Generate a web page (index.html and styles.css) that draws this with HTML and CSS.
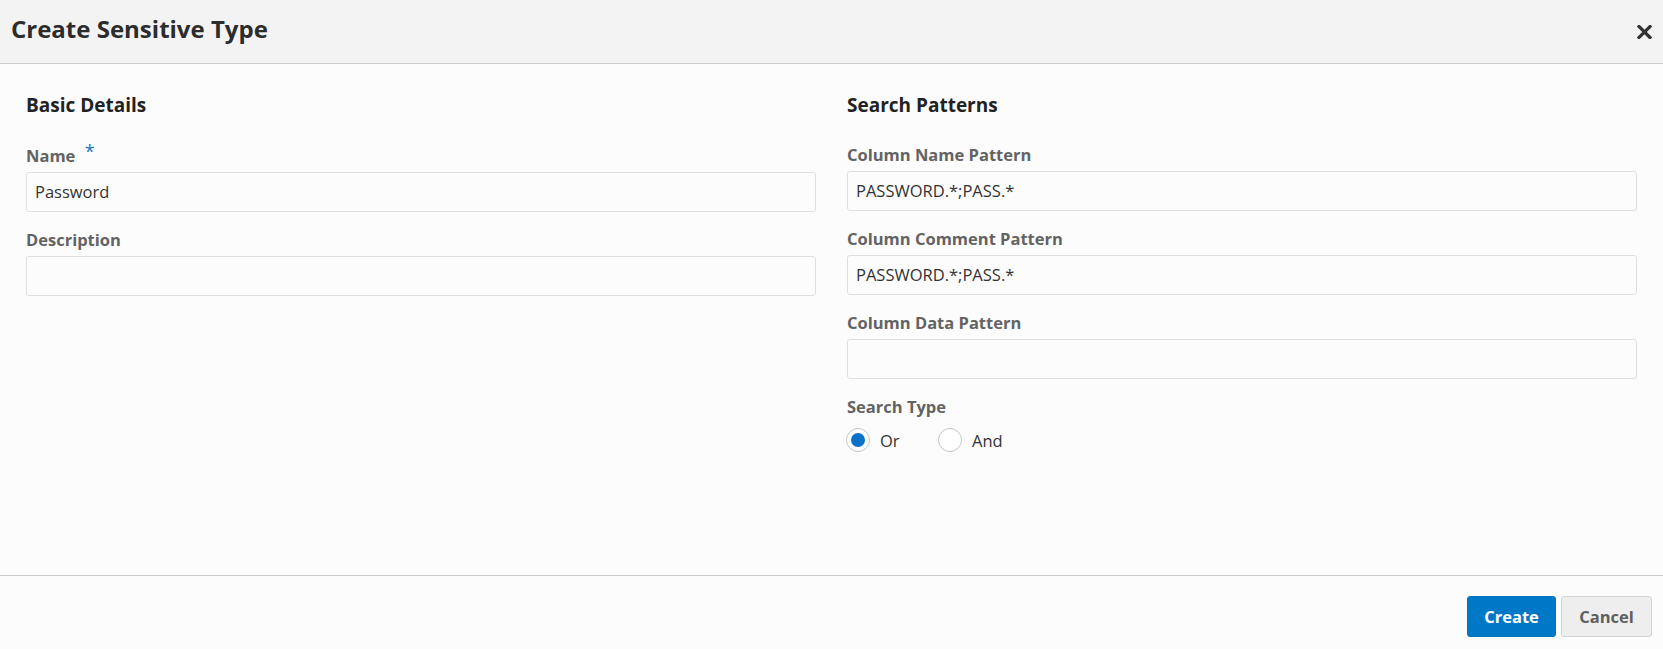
FILE: index.html
```html
<!DOCTYPE html>
<html lang="en">
<head>
<meta charset="utf-8">
<title>Create Sensitive Type</title>
<link rel="stylesheet" href="styles.css">
</head>
<body>
<div class="dialog">
  <header class="dlg-header">
    <h1 class="dlg-title">Create Sensitive Type</h1>
    <button class="close-btn" aria-label="Close">
      <svg width="15" height="14" viewBox="0 0 15 14"><path d="M2 1.5 L13 12.5 M13 1.5 L2 12.5" stroke="#333" stroke-width="3.2" stroke-linecap="square" fill="none"/></svg>
    </button>
  </header>
  <main class="dlg-body">
    <section class="col">
      <h2 class="section-title">Basic Details</h2>
      <div class="field">
        <label class="field-label">Name <span class="req">*</span></label>
        <div class="input">Password</div>
      </div>
      <div class="field">
        <label class="field-label">Description</label>
        <div class="input"></div>
      </div>
    </section>
    <section class="col">
      <h2 class="section-title">Search Patterns</h2>
      <div class="field">
        <label class="field-label">Column Name Pattern</label>
        <div class="input">PASSWORD.*;PASS.*</div>
      </div>
      <div class="field">
        <label class="field-label">Column Comment Pattern</label>
        <div class="input">PASSWORD.*;PASS.*</div>
      </div>
      <div class="field">
        <label class="field-label">Column Data Pattern</label>
        <div class="input"></div>
      </div>
      <div class="field field-radio">
        <label class="field-label">Search Type</label>
        <div class="radios">
          <span class="radio-item"><span class="radio checked"></span><span class="radio-text">Or</span></span>
          <span class="radio-item"><span class="radio"></span><span class="radio-text">And</span></span>
        </div>
      </div>
    </section>
  </main>
  <footer class="dlg-footer">
    <button class="btn btn-primary">Create</button>
    <button class="btn btn-secondary">Cancel</button>
  </footer>
</div>
</body>
</html>
```
FILE: styles.css
```css
* { box-sizing: border-box; }
html, body {
  margin: 0;
  padding: 0;
  background: #fcfcfc;
  font-family: "Open Sans", "Noto Sans", sans-serif;
}
.dialog {
  height: 649px;
  display: flex;
  flex-direction: column;
  background: #fcfcfc;
}
.dlg-header {
  height: 64px;
  flex: none;
  background: #f3f3f3;
  border-bottom: 1px solid #cbcbcb;
  display: flex;
  justify-content: space-between;
  align-items: flex-start;
  padding: 13px 11px 0 11px;
}
.dlg-title {
  margin: 0;
  font-size: 24px;
  line-height: 32px;
  font-weight: 700;
  color: #2c2c2c;
}
.close-btn {
  border: 0;
  background: transparent;
  padding: 0;
  margin-top: 12px;
  width: 15px;
  height: 14px;
  display: block;
}
.close-btn svg { display: block; }
.dlg-body {
  flex: 1;
  display: grid;
  grid-template-columns: 1fr 1fr;
  column-gap: 31px;
  padding: 29px 26px 0 26px;
}
.section-title {
  margin: 0 0 28px 0;
  font-size: 19px;
  line-height: 24px;
  font-weight: 700;
  color: #222;
}
.field { margin-bottom: 18px; }
.field-radio { margin-top: 2px; }
.field-label {
  display: block;
  font-size: 16.5px;
  line-height: 20px;
  font-weight: 700;
  color: #636363;
  margin-bottom: 6px;
}
.req {
  color: #1b74bb;
  font-weight: 400;
  font-size: 18px;
  position: relative;
  top: -4px;
  margin-left: 5px;
}
.input {
  height: 40px;
  border: 1px solid #dfdfdf;
  border-radius: 3px;
  background: #fcfcfc;
  padding: 0 8px;
  font-size: 16.5px;
  line-height: 38px;
  color: #333;
}
.radios {
  display: flex;
  align-items: center;
  height: 34px;
  margin-top: 3px;
}
.radio-item {
  display: inline-flex;
  align-items: center;
  margin-right: 19px;
}
.radio {
  width: 24px;
  height: 24px;
  border-radius: 50%;
  border: 1px solid #c6c6c6;
  background: #fff;
  display: inline-flex;
  align-items: center;
  justify-content: center;
  margin-right: 10px;
  margin-left: -1px;
}
.radio.checked::after {
  content: "";
  width: 14px;
  height: 14px;
  border-radius: 50%;
  background: #0b72c7;
}
.radio-text {
  font-size: 16.5px;
  color: #333;
  min-width: 40px;
}
.dlg-footer {
  flex: none;
  border-top: 1px solid #cbcbcb;
  padding: 20px 11px 12px 11px;
  display: flex;
  justify-content: flex-end;
  gap: 5px;
}
.btn {
  height: 41px;
  font-family: "Open Sans", "Noto Sans", sans-serif;
  font-size: 16.5px;
  font-weight: 700;
  border-radius: 3px;
  padding: 0 10px;
  cursor: pointer;
}
.btn-primary {
  width: 89px;
  background: #0078c8;
  border: 1px solid #0074c0;
  color: #fff;
}
.btn-secondary {
  width: 91px;
  background: #eeeeee;
  border: 1px solid #d2d2d2;
  color: #5f5f5f;
}
```
